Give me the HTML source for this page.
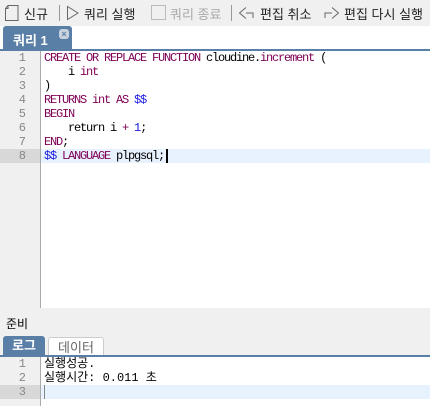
<!DOCTYPE html><html><head><meta charset="utf-8"><style>
body{margin:0;width:430px;height:406px;overflow:hidden;background:#f0f0f0;font-family:"Liberation Sans","Noto Sans CJK KR",sans-serif;font-size:12px;position:relative}
.a{position:absolute}
.tb{top:0;left:0;width:430px;height:26px;background:#f0f0f0;color:#222;font-size:13px}
.tb span{position:absolute;top:4px;white-space:nowrap}
.ed{font-family:"Liberation Mono","Noto Sans CJK KR",monospace;font-size:12px;letter-spacing:-1.2px}
.ln{position:absolute;left:0;width:26px;text-align:right;color:#888;height:14px;line-height:14px;letter-spacing:0}
.tx{position:absolute;left:44px;height:14px;line-height:14px;white-space:pre;color:#000}
.k{color:#7f0055}.d{color:#1a1adf}
</style></head><body>
<div class="a tb">
<svg class="a" style="left:4px;top:4px" width="16" height="18"><path d="M4 1.5h10v15H1.5V4.5z M4 1.5v3H1.5" fill="none" stroke="#666"/></svg>
<span style="left:24px">신규</span>
<div class="a" style="left:59px;top:5px;width:1px;height:16px;background:#999"></div>
<svg class="a" style="left:66px;top:5px" width="14" height="16"><path d="M1.5 1.5L12 8 1.5 14.5z" fill="none" stroke="#666"/></svg>
<span style="left:84px">쿼리 실행</span>
<svg class="a" style="left:150px;top:4px" width="17" height="17"><rect x="1.5" y="1.5" width="14" height="14" fill="none" stroke="#bbb"/></svg>
<span style="left:170px;color:#aaa">쿼리 종료</span>
<div class="a" style="left:231px;top:5px;width:1px;height:16px;background:#999"></div>
<svg class="a" style="left:238px;top:6px" width="18" height="14"><path d="M8 1.5L1.5 7 8 12.5 M8 7h7v5" fill="none" stroke="#666"/></svg>
<span style="left:260px">편집 취소</span>
<svg class="a" style="left:322px;top:6px" width="18" height="14"><path d="M10 1.5L16.5 7 10 12.5 M10 7H3v5" fill="none" stroke="#666"/></svg>
<span style="left:344px">편집 다시 실행</span>
</div>
<div class="a" style="top:26px;left:0;width:430px;height:25px;background:#fff"></div>
<div class="a" style="top:26px;left:3px;width:69px;height:24px;background:#5a7fa6;border-radius:3px 3px 0 0"></div>
<div class="a" style="top:30px;left:13px;color:#fff;font-weight:bold;font-size:13px">쿼리 1</div>
<div class="a" style="top:29px;left:59px;width:10px;height:10px;border-radius:3px;background:#c8d2dc;color:#5a7fa6;font-size:9px;line-height:10px;text-align:center;font-weight:bold">×</div>
<div class="a" style="top:49px;left:0;width:430px;height:2px;background:#5a7fa6"></div>
<div class="a ed" style="top:51px;left:0;width:430px;height:257px;background:#fff">
<div class="a" style="left:0;top:0;width:40px;height:257px;background:#f0f0f0;border-right:1px solid #aaa"></div>
<div class="a" style="left:0;top:98px;width:40px;height:14px;background:#d8d8d8"></div>
<div class="a" style="left:41px;top:98px;width:389px;height:14px;background:#e8f2fe"></div>
<div class="ln" style="top:0">1</div><div class="ln" style="top:14px">2</div><div class="ln" style="top:28px">3</div><div class="ln" style="top:42px">4</div><div class="ln" style="top:56px">5</div><div class="ln" style="top:70px">6</div><div class="ln" style="top:84px">7</div><div class="ln" style="top:98px">8</div>
<div class="tx" style="top:0"><span class="k">CREATE OR REPLACE FUNCTION</span> cloudine.<span class="k">increment</span> (</div>
<div class="tx" style="top:14px">    i <span class="k">int</span></div>
<div class="tx" style="top:28px">)</div>
<div class="tx" style="top:42px"><span class="k">RETURNS int AS</span> <span class="d">$$</span></div>
<div class="tx" style="top:56px"><span class="k">BEGIN</span></div>
<div class="tx" style="top:70px">    return i <span class="k">+</span> <span class="d">1</span>;</div>
<div class="tx" style="top:84px"><span class="k">END</span>;</div>
<div class="tx" style="top:98px"><span class="d">$$</span> <span class="k">LANGUAGE</span> plpgsql;<span style="border-left:2px solid #000;margin-left:2px"></span></div>
</div>
<div class="a" style="top:315px;left:6px">준비</div>
<div class="a" style="top:336px;left:3px;width:42px;height:20px;background:#5a7fa6;border-radius:3px 3px 0 0;color:#fff;font-weight:bold;text-align:center;line-height:20px;font-size:13px">로그</div>
<div class="a" style="top:337px;left:48px;width:54px;height:19px;background:#fff;border:1px solid #ccc;border-bottom:none;border-radius:3px 3px 0 0;color:#666;text-align:center;line-height:19px;font-size:13px">데이터</div>
<div class="a" style="top:355px;left:0;width:430px;height:2px;background:#5a7fa6"></div>
<div class="a ed" style="top:357px;left:0;width:430px;height:49px;background:#fff">
<div class="a" style="left:0;top:0;width:40px;height:49px;background:#f0f0f0;border-right:1px solid #aaa"></div>
<div class="a" style="left:0;top:28px;width:40px;height:14px;background:#d8d8d8"></div>
<div class="a" style="left:41px;top:28px;width:389px;height:14px;background:#e8f2fe"></div>
<div class="ln" style="top:0">1</div><div class="ln" style="top:14px">2</div><div class="ln" style="top:28px">3</div>
<div class="tx" style="top:0;letter-spacing:0">실행성공.</div>
<div class="tx" style="top:14px;letter-spacing:0">실행시간: 0.011 초</div>
<div class="tx" style="top:28px"><span style="border-left:1px solid #888"></span></div>
</div>
</body></html>
